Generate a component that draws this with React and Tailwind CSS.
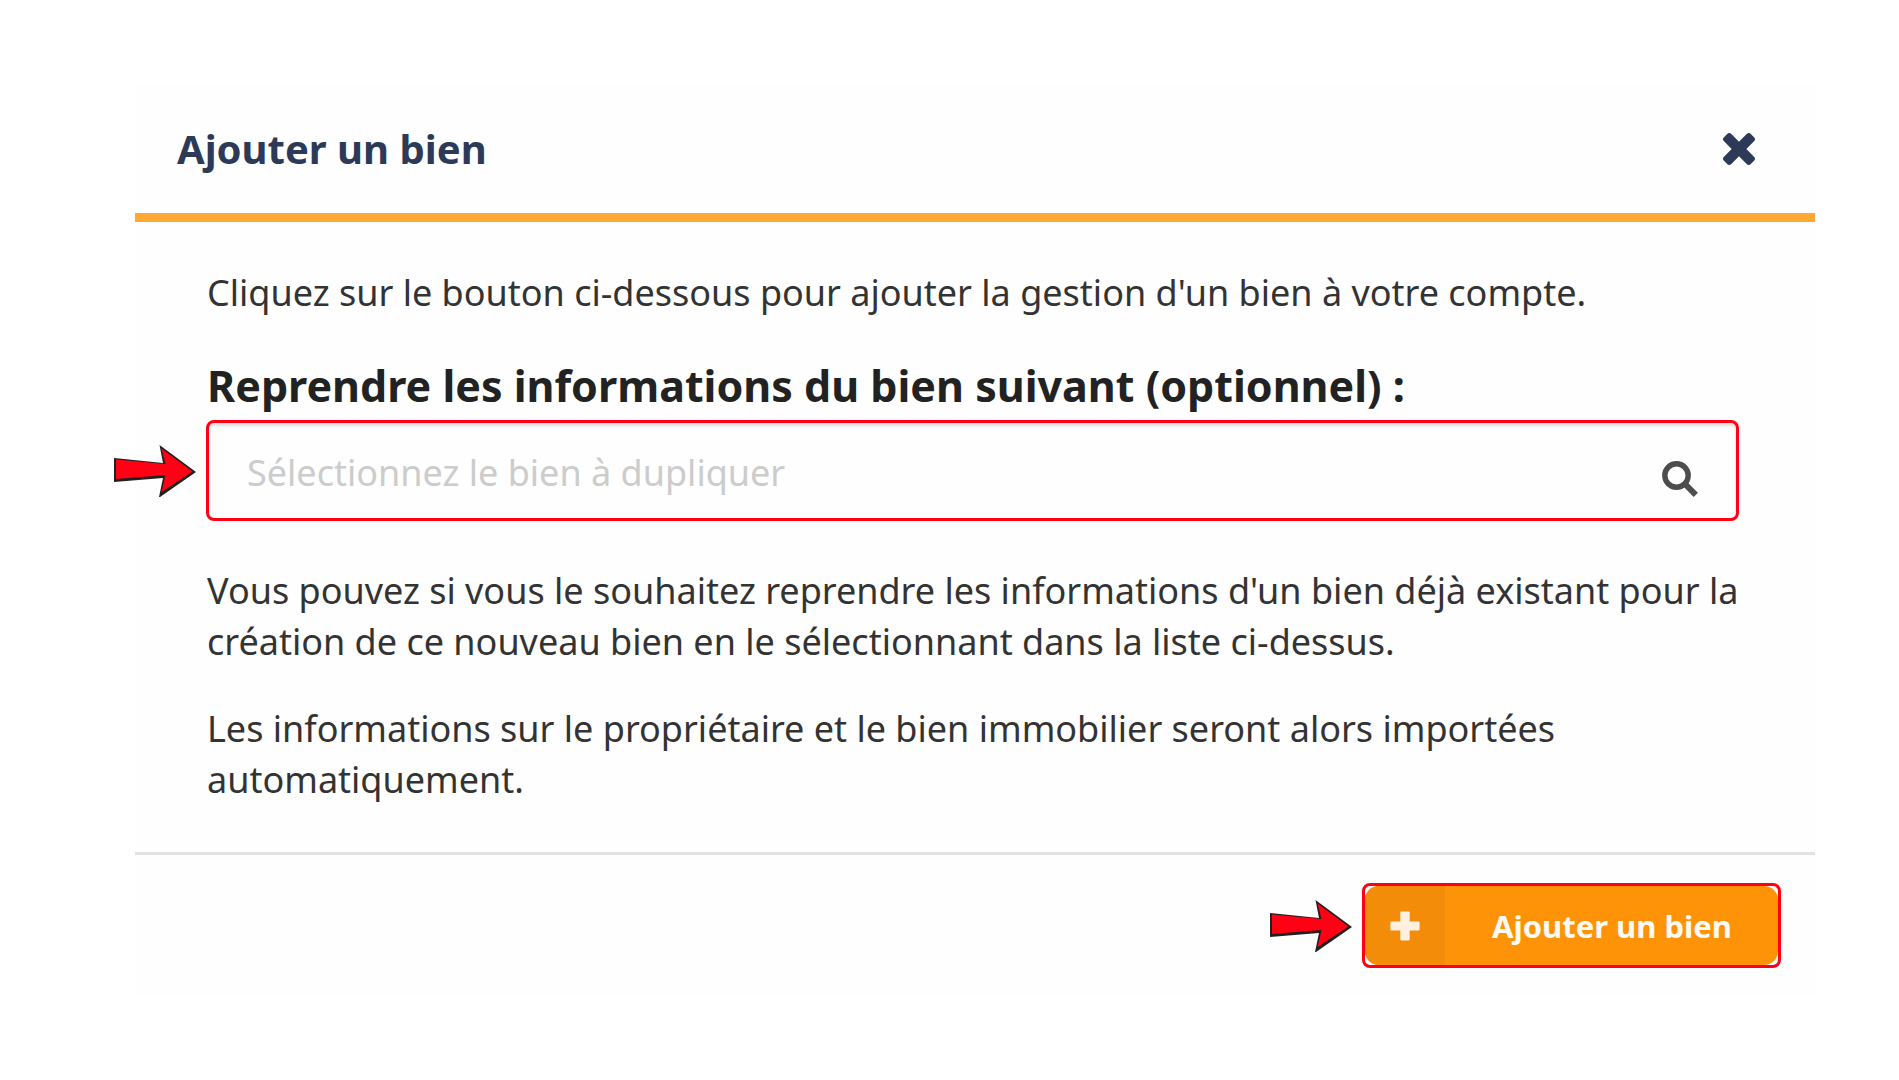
import React, { useState } from 'react';

const NOTES = [
    "Vous pouvez si vous le souhaitez reprendre les informations d'un bien déjà existant pour la création de ce nouveau bien en le sélectionnant dans la liste ci-dessus.",
    'Les informations sur le propriétaire et le bien immobilier seront alors importées automatiquement.',
];

const CloseIcon = () => (
    <svg viewBox="302 366 1188 1188" fill="currentColor" className="size-8" aria-hidden="true">
        <path d="M1490 1322q0 40-28 68l-136 136q-28 28-68 28t-68-28l-294-294-294 294q-28 28-68 28t-68-28l-136-136q-28-28-28-68t28-68l294-294-294-294q-28-28-28-68t28-68l136-136q28-28 68-28t68 28l294 294 294-294q28-28 68-28t68 28l136 136q28 28 28 68t-28 68l-294 294 294 294q28 28 28 68z" />
    </svg>
);

const SearchIcon = () => (
    <svg viewBox="0 0 36 36" fill="none" stroke="currentColor" className="mt-4 size-9 shrink-0" aria-hidden="true">
        <circle cx="14.5" cy="14.5" r="11.7" strokeWidth="5.4" />
        <path d="M23 23l10.8 10.8" strokeWidth="6" />
    </svg>
);

const PlusIcon = () => (
    <svg viewBox="0 0 30 30" fill="currentColor" className="size-[30px]" aria-hidden="true">
        <path d="M11.3 0.6h7.4q1 0 1 1v9h8.7q1.2 0 1.2 1.2v6.4q0 1.2-1.2 1.2h-8.7v9q0 1-1 1h-7.4q-1 0-1-1v-9H1.6q-1.2 0-1.2-1.2v-6.4q0-1.2 1.2-1.2h8.7v-9q0-1 1-1z" />
    </svg>
);

const Arrow = () => (
    <svg viewBox="0 0 82 52" className="h-[52px] w-[82px]" aria-hidden="true">
        <path d="M0 13L49 18 45.5 0 82 27 46 52H45L49 33 0 37z" fill="#231f20" />
        <path d="M2 14.5L51.5 19 47.5 3.5 78.5 26.5 47.5 47 51.5 30 2 34z" fill="#ff0015" />
    </svg>
);

const App = () => {
    const [search, setSearch] = useState('');

    return (
        <main className="min-h-screen bg-white pt-[84px] pr-[84px] pl-[135px] font-['Noto_Sans',sans-serif] text-[#333333]">
            <section role="dialog" aria-labelledby="dialog-title" className="bg-[#fefefe]">
                <header className="flex h-[138px] items-center justify-between border-b-9 border-[#ffa834] pr-[60px] pl-[42px] text-[#2c3a57]">
                    <h1 id="dialog-title" className="text-[40px] leading-[52px] font-bold">Ajouter un bien</h1>
                    <button type="button" aria-label="Fermer">
                        <CloseIcon />
                    </button>
                </header>

                <div className="pt-[45px] pr-[76px] pb-[47px] pl-[72px] text-[36px] leading-[51px]">
                    <p>Cliquez sur le bouton ci-dessous pour ajouter la gestion d'un bien à votre compte.</p>

                    <label htmlFor="bien" className="mt-[38px] block text-[43px] leading-[60px] font-bold text-[#222222]">
                        Reprendre les informations du bien suivant (optionnel) :
                    </label>
                    <div className="relative mt-1 -ml-px flex h-[101px] items-center rounded-lg border-[3px] border-[#ff0015] px-[38px] text-[#4d4d4d] shadow-[inset_0_3px_3px_rgba(0,0,0,0.12)]">
                        <div className="absolute -left-[95px]">
                            <Arrow />
                        </div>
                        <input
                            id="bien"
                            type="text"
                            value={search}
                            onChange={(e) => setSearch(e.target.value)}
                            placeholder="Sélectionnez le bien à dupliquer"
                            className="min-w-0 flex-1 bg-transparent pt-1 outline-none placeholder:text-[#cccccc]"
                        />
                        <SearchIcon />
                    </div>

                    <div className="mt-[44px] flex flex-col gap-9">
                        {NOTES.map((note) => (
                            <p key={note}>{note}</p>
                        ))}
                    </div>
                </div>

                <footer className="flex items-center justify-end gap-2.5 border-t-[3px] border-[#e2e2e2] pt-7 pr-[34px] pb-7">
                    <Arrow />
                    <div className="rounded-lg border-[3px] border-[#ff0015]">
                        <button type="button" className="flex h-[79px] items-stretch overflow-hidden rounded-[14px] bg-[#ff9307] text-[31px] leading-10 font-bold text-[#fffaf3]">
                            <span className="flex w-20 items-center justify-center bg-[#f38d09] text-[#fff0e0]">
                                <PlusIcon />
                            </span>
                            <span className="flex items-center pr-[46px] pl-[47px]">Ajouter un bien</span>
                        </button>
                    </div>
                </footer>
            </section>
        </main>
    );
};

export default App;
